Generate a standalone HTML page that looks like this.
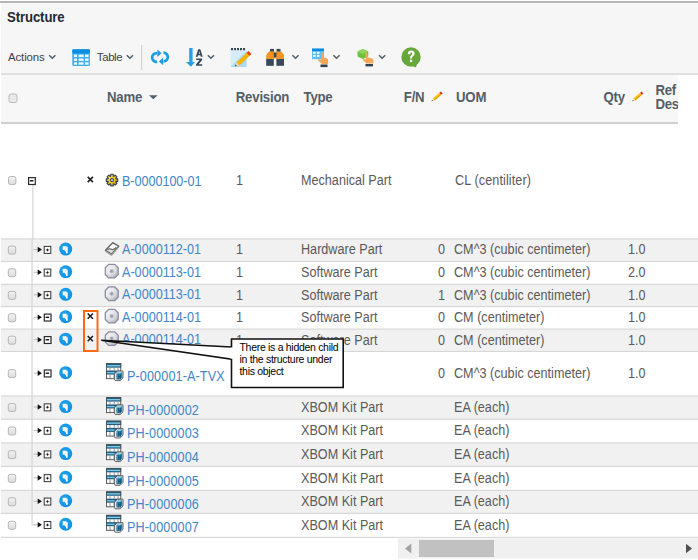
<!DOCTYPE html>
<html><head><meta charset="utf-8"><title>Structure</title>
<style>
html,body{margin:0;padding:0;width:698px;height:560px;overflow:hidden;background:#fff}
body{position:relative;font-family:"Liberation Sans", sans-serif}
.t{position:absolute;white-space:nowrap;line-height:20px}
svg{position:absolute;left:0;top:0}
</style></head><body>
<svg width="698" height="560" viewBox="0 0 698 560"><defs>
<linearGradient id="cbg" x1="0" y1="0" x2="0" y2="1"><stop offset="0" stop-color="#f2f2f2"/><stop offset="1" stop-color="#dcdcdc"/></linearGradient>
<linearGradient id="swl" x1="0" y1="0" x2="1" y2="1"><stop offset="0" stop-color="#fafafa"/><stop offset="0.45" stop-color="#e4e4e8"/><stop offset="1" stop-color="#ababb8"/></linearGradient><radialGradient id="swg" cx="0.5" cy="0.5" r="0.5"><stop offset="0" stop-color="#8c8ca0"/><stop offset="0.3" stop-color="#a8a8b6" stop-opacity="0.9"/><stop offset="0.55" stop-color="#e4e4ea" stop-opacity="0.6"/><stop offset="1" stop-color="#ffffff" stop-opacity="0"/></radialGradient>
<radialGradient id="blg" cx="0.4" cy="0.4" r="0.65"><stop offset="0" stop-color="#22a6f0"/><stop offset="1" stop-color="#0b8fe0"/></radialGradient>
<linearGradient id="gg" x1="0" y1="0" x2="1" y2="1"><stop offset="0" stop-color="#fff27a"/><stop offset="0.5" stop-color="#f5d21a"/><stop offset="1" stop-color="#d9a800"/></linearGradient>
<g id="cb"><rect x="0.5" y="0.5" width="7.4" height="8" rx="2" fill="url(#cbg)" stroke="#b4b4b4" stroke-width="1"/></g>
<g id="plus"><rect x="0.5" y="0.5" width="6.6" height="7" fill="#fff" stroke="#333" stroke-width="1"/><path d="M2 4 H5.6 M3.8 2.2 V5.8" stroke="#a0a0a0" stroke-width="0.8"/><circle cx="3.8" cy="4" r="1" fill="#111"/></g>
<g id="minus"><rect x="0.6" y="0.6" width="6.7" height="6.9" fill="#fff" stroke="#2a2a2a" stroke-width="1.2"/><path d="M1.9 3.8 H5.4" stroke="#111" stroke-width="1.4"/></g>
<g id="arr"><path d="M0 0 H4.3" stroke="#b8b8b8" stroke-width="1"/><path d="M4 -2.8 L8.2 0 L4 2.8 Z" fill="#111"/></g>
<g id="blue"><circle cx="0" cy="0" r="6.5" fill="url(#blg)"/><path d="M-3 -2.9 H0.75 L1.1 -2 H1.95 V4.15 H0.25 V2.6 L-1.5 0.9 H-3 Z" fill="#fff"/><path d="M1.1 -2.2 L-1.1 0.7" stroke="#9ad6f8" stroke-width="0.6"/></g>
<g id="xm"><path d="M0.9 0.9 L6.1 6.1 M6.1 0.9 L0.9 6.1" stroke="#1a1a1a" stroke-width="1.5"/></g>
<g id="sw"><path d="M4.1 0.7 H10.1 L13.6 4.2 V10.8 L10.1 14.3 H4.1 L0.7 10.8 V4.2 Z" fill="url(#swl)" stroke="#8a8aa2" stroke-width="1.3"/><circle cx="7.1" cy="7.5" r="4.6" fill="url(#swg)"/></g>
<g id="hw"><path d="M7.7 0.8 L13.8 4.1 L6.7 12.4 L0.4 8.4 Z" fill="#dcdcdc" stroke="#646464" stroke-width="1.3" stroke-linejoin="round"/><path d="M7.7 2.2 L12 4.5 L8.8 8 L4.2 5.8 Z" fill="#fafafa"/><path d="M2.6 7.9 Q4.8 6.2 6.4 7.4 Q8 8.6 11.2 5.6" fill="none" stroke="#666" stroke-width="1.1"/><path d="M0.6 9.4 L6.5 13.2 L13.8 5" fill="none" stroke="#999" stroke-width="1.2"/></g>
<g id="kit">
<rect x="0" y="0" width="15.2" height="15.8" fill="#fafafa"/>
<rect x="0" y="0" width="15.2" height="4.4" fill="#1e5c7c"/>
<rect x="0.6" y="1.8" width="14" height="1.4" fill="#7acbec"/>
<rect x="0" y="7.3" width="15.2" height="4" fill="#1e5c7c"/>
<rect x="0.6" y="8.8" width="8" height="1.3" fill="#7acbec"/>
<path d="M4 4.4 V7.3 M8.2 4.4 V7.3 M12 4.4 V7.3 M4 11.3 V15.5 M8.2 11.3 V15.5" stroke="#8a8a8a" stroke-width="0.9"/>
<rect x="0.45" y="0.45" width="14.3" height="15" fill="none" stroke="#4e4e4e" stroke-width="0.9"/>
<path d="M8.4 10.6 L11.6 7.8 L17 7.8 L17 14.6 L14.2 17.4 L9.2 17.4 L8.4 16 Z" fill="#e9e9e9" stroke="#555" stroke-width="0.9"/>
<path d="M10.4 10.6 L12.2 8.8 L16.2 8.8 L16.2 14.2 L14.2 16.2 L10.4 16.2 Z" fill="#2a7aa3"/>
<path d="M10.4 10.6 L12.2 8.8 L16.2 8.8 L14.4 10.6 Z" fill="#86d0ee"/>
<path d="M14.4 10.6 V16.2 M12.2 10.6 V16 M10.4 13.4 H14.4" stroke="#164f6e" stroke-width="0.8"/>
<path d="M11.2 11.4 V15.2" stroke="#6ec2e6" stroke-width="0.7"/>
</g>
<g id="gear"><path d="M4.79 2.08 L4.71 0.24 L7.29 0.24 L7.21 2.08 L7.91 2.37 L9.16 1.02 L10.98 2.84 L9.63 4.09 L9.92 4.79 L11.76 4.71 L11.76 7.29 L9.92 7.21 L9.63 7.91 L10.98 9.16 L9.16 10.98 L7.91 9.63 L7.21 9.92 L7.29 11.76 L4.71 11.76 L4.79 9.92 L4.09 9.63 L2.84 10.98 L1.02 9.16 L2.37 7.91 L2.08 7.21 L0.24 7.29 L0.24 4.71 L2.08 4.79 L2.37 4.09 L1.02 2.84 L2.84 1.02 L4.09 2.37 Z" fill="url(#gg)" stroke="#353a58" stroke-width="1.05" stroke-linejoin="round"/><circle cx="6" cy="6" r="1.7" fill="#aab2e6" stroke="#353a58" stroke-width="0.9"/></g>
</defs>
<rect x="0" y="0" width="698" height="560" fill="#ffffff"/>
<rect x="1" y="3" width="697" height="70" fill="#f6f6f6"/>
<rect x="0" y="1" width="698" height="2" fill="#b6b6b6"/>
<rect x="1" y="73" width="697" height="2" fill="#e0e0e0"/>
<rect x="1" y="75" width="677" height="47" fill="#f7f7f7"/>
<rect x="1" y="122" width="677" height="2" fill="#cfcfcf"/>
<rect x="1" y="124" width="697" height="114.93" fill="#ffffff"/>
<rect x="1" y="238.93" width="697" height="22.529999999999973" fill="#f1f1f1"/>
<rect x="1" y="261.46" width="697" height="22.83000000000004" fill="#ffffff"/>
<rect x="1" y="284.29" width="697" height="22.279999999999973" fill="#f1f1f1"/>
<rect x="1" y="306.57" width="697" height="22.53000000000003" fill="#ffffff"/>
<rect x="1" y="329.1" width="697" height="22.359999999999957" fill="#f1f1f1"/>
<rect x="1" y="351.46" width="697" height="44.54000000000002" fill="#ffffff"/>
<rect x="1" y="396.0" width="697" height="23.30000000000001" fill="#f1f1f1"/>
<rect x="1" y="419.3" width="697" height="23.629999999999995" fill="#ffffff"/>
<rect x="1" y="442.93" width="697" height="23.569999999999993" fill="#f1f1f1"/>
<rect x="1" y="466.5" width="697" height="23.860000000000014" fill="#ffffff"/>
<rect x="1" y="490.36" width="697" height="23.0" fill="#f1f1f1"/>
<rect x="1" y="513.36" width="697" height="24.0" fill="#ffffff"/>
<rect x="1" y="238.38" width="697" height="1.1" fill="#d6d6d6"/>
<rect x="1" y="260.90999999999997" width="697" height="1.1" fill="#d6d6d6"/>
<rect x="1" y="283.74" width="697" height="1.1" fill="#d6d6d6"/>
<rect x="1" y="306.02" width="697" height="1.1" fill="#d6d6d6"/>
<rect x="1" y="328.55" width="697" height="1.1" fill="#d6d6d6"/>
<rect x="1" y="350.90999999999997" width="697" height="1.1" fill="#d6d6d6"/>
<rect x="1" y="395.45" width="697" height="1.1" fill="#d6d6d6"/>
<rect x="1" y="418.75" width="697" height="1.1" fill="#d6d6d6"/>
<rect x="1" y="442.38" width="697" height="1.1" fill="#d6d6d6"/>
<rect x="1" y="465.95" width="697" height="1.1" fill="#d6d6d6"/>
<rect x="1" y="489.81" width="697" height="1.1" fill="#d6d6d6"/>
<rect x="1" y="512.8100000000001" width="697" height="1.1" fill="#d6d6d6"/>
<rect x="1" y="536.8100000000001" width="697" height="1.1" fill="#d6d6d6"/>
<rect x="32.3" y="185" width="1.1" height="54" fill="#d2d2d2"/>
<rect x="31.5" y="239" width="1.1" height="286" fill="#d2d2d2"/>
<rect x="398" y="538.5" width="300" height="20" fill="#f0f0f0"/>
<rect x="419" y="540" width="75" height="17" fill="#c1c1c1"/>
<path d="M411.3 543.4 L405 548.5 L411.3 553.6 Z" fill="#a3a3a3"/>
<path d="M686 543.7 L692 548.5 L686 553.3 Z" fill="#505050"/>
<path d="M49.199999999999996 55.300000000000004 L52.3 58.300000000000004 L55.4 55.300000000000004" fill="none" stroke="#4e5d68" stroke-width="1.5"/>
<path d="M126.8 55.2 L129.9 58.2 L133 55.2" fill="none" stroke="#4e5d68" stroke-width="1.5"/>
<path d="M207.8 55.2 L210.9 58.2 L214 55.2" fill="none" stroke="#4e5d68" stroke-width="1.5"/>
<path d="M292.40000000000003 55.300000000000004 L295.5 58.300000000000004 L298.6 55.300000000000004" fill="none" stroke="#4e5d68" stroke-width="1.5"/>
<path d="M333.40000000000003 55.2 L336.5 58.2 L339.6 55.2" fill="none" stroke="#4e5d68" stroke-width="1.5"/>
<path d="M379.0 55.300000000000004 L382.09999999999997 58.300000000000004 L385.2 55.300000000000004" fill="none" stroke="#4e5d68" stroke-width="1.5"/>
<rect x="141" y="45" width="1.2" height="25" fill="#d4d4d4"/>
<g>
<rect x="72.3" y="49.2" width="17.6" height="16.8" rx="1.5" fill="#3eaef0"/>
<rect x="72.3" y="49.2" width="17.6" height="4.3" rx="1" fill="#0b8ee0"/>
<g fill="#ffffff" opacity="0.92">
<rect x="74" y="54.6" width="3" height="2.4"/><rect x="78.6" y="54.6" width="5" height="2.4"/><rect x="85" y="54.6" width="3.6" height="2.4"/>
<rect x="74" y="58.5" width="3" height="2.4"/><rect x="78.6" y="58.5" width="5" height="2.4"/><rect x="85" y="58.5" width="3.6" height="2.4"/>
<rect x="74" y="62.3" width="3" height="2.4"/><rect x="78.6" y="62.3" width="5" height="2.4"/><rect x="85" y="62.3" width="3.6" height="2.4"/>
</g></g>
<g fill="none" stroke="#1b9be3" stroke-width="2.7">
<path d="M157 53.3 A4.3 4.3 0 1 0 157.2 61.8"/>
<path d="M163.5 52.7 A4.3 4.3 0 1 1 163.6 61.3"/>
</g>
<g fill="#1b9be3">
<path d="M157.3 49.6 L161.6 53.3 L157.3 57 Z"/>
<path d="M163.2 57.6 L158.9 61.4 L163.2 65.2 Z"/>
</g>
<g fill="#249fe8">
<rect x="189.2" y="48" width="3.4" height="14.5"/>
<path d="M186 62 L195 62 L190.9 66.8 Z"/>
</g>
<g fill="#34475a"><path fill-rule="evenodd" d="M195.8 56.7 L198.2 49.2 L200.3 49.2 L202.7 56.7 L200.8 56.7 L200.35 55.2 L198.15 55.2 L197.7 56.7 Z M198.6 53.7 L199.9 53.7 L199.25 51.3 Z"/><path d="M196.2 58.4 H202.1 V59.9 L198.6 64.2 H202.2 V65.7 H196.1 V64.2 L199.6 59.9 H196.2 Z"/></g>
<g>
<rect x="230.5" y="48.5" width="16" height="18.5" fill="#d5ecfa"/>
<path d="M230.5 67 L246.5 51 L246.5 67 Z" fill="#a9d9f5"/>
<g fill="#3d4650"><rect x="231" y="48" width="2" height="2.2"/><rect x="234" y="48" width="2" height="2.2"/><rect x="237" y="48" width="2" height="2.2"/><rect x="240" y="48" width="2" height="2.2"/><rect x="243" y="48" width="2" height="2.2"/></g>
<path d="M236.5 62.5 L247.5 52 L250.5 55 L239.5 65.5 Z" fill="#f6b400"/>
<path d="M246.5 52.8 L248.5 51 L251.5 54 L249.5 55.8 Z" fill="#e8421a"/>
<path d="M236.5 62.5 L239.5 65.5 L235 66.8 Z" fill="#f3d7a6"/>
<path d="M235.6 64.5 L236.8 65.8 L235 66.5 Z" fill="#333"/>
</g>
<g>
<rect x="270" y="48.9" width="4" height="3" fill="#37495a"/>
<rect x="276.5" y="48.9" width="4" height="3" fill="#37495a"/>
<path d="M266.2 55 L269 51.5 L274.5 51.5 L274.5 59 L266.2 59 Z" fill="#f7931e"/>
<path d="M284 55 L281.2 51.5 L275.7 51.5 L275.7 59 L284 59 Z" fill="#f7931e"/>
<rect x="273.8" y="52.5" width="2.6" height="5" fill="#37495a"/>
<rect x="266.2" y="59" width="7.6" height="6.8" fill="#37495a"/>
<rect x="276.4" y="59" width="7.6" height="6.8" fill="#37495a"/>
</g>
<g>
<rect x="312" y="48.6" width="12" height="10.6" fill="#5cc0f5"/>
<rect x="312" y="48.6" width="12" height="2.4" fill="#0a88dc"/>
<g fill="#fff"><rect x="313.2" y="52" width="2.4" height="1.8"/><rect x="317" y="52" width="2.4" height="1.8"/><rect x="313.2" y="55" width="2.4" height="1.8"/><rect x="317" y="55" width="2.4" height="1.8"/></g>
<path d="M321.5 52.5 Q323 52 323.3 53.5 L323.5 57.5 Q327.5 57.5 328.2 60 L328 64 L322 64 L318 60.5 Q317.5 59 319 59 L321 60 Z" fill="#f6a85a"/>
<rect x="320.5" y="64.5" width="7" height="2.6" fill="#2e3f4e"/>
</g>
<g>
<path d="M362.9 48.9 L368.3 51.5 L368.3 56.5 L362.9 59 L357.5 56.5 L357.5 51.5 Z" fill="#6cc23a"/>
<path d="M362.9 48.9 L368.3 51.5 L362.9 54 L357.5 51.5 Z" fill="#8fd65a"/>
<path d="M365.5 52.8 Q367 52.3 367.3 53.8 L367.5 57.5 Q372.8 57.5 373.5 60 L373.3 63.5 L366.5 63.5 L362.8 60.3 Q362.5 59 364 59 L365.5 59.8 Z" fill="#f6a85a"/>
<rect x="365.5" y="64" width="7.5" height="2.4" fill="#2e3f4e"/>
</g>
<g>
<circle cx="411" cy="57" r="9.7" fill="#68a83a"/>
<path d="M410.5 65 L417.5 63 L415.8 67.4 Z" fill="#68a83a"/>
<path d="M407.8 54.2 Q407.8 50.6 411.2 50.6 Q414.6 50.6 414.6 53.8 Q414.6 55.6 412.6 56.6 Q412 57 412 58.6 L410 58.6 Q410 56.2 411.2 55.3 Q412.3 54.6 412.3 53.7 Q412.3 52.6 411.2 52.6 Q410.1 52.6 410.1 54.2 Z" fill="#fff"/>
<rect x="409.9" y="59.8" width="2.3" height="2.3" fill="#fff"/>
</g>
<rect x="9" y="94" width="8" height="8.5" rx="2" fill="#e9e9e9" stroke="#b9b9b9" stroke-width="1"/>
<path d="M149 95.2 L157.6 95.2 L153.3 99.3 Z" fill="#4f5f6c"/>
<g transform="translate(431.6,101.2)">
<path d="M1.21 -2.89 L7.73 -8.49 L9.55 -6.37 L3.04 -0.76 Z" fill="#f7c51c"/>
<path d="M2.32 -1.60 L8.84 -7.21 L9.55 -6.37 L3.04 -0.76 Z" fill="#e9a000"/>
<path d="M7.73 -8.49 L9.24 -9.80 L11.07 -7.68 L9.55 -6.37 Z" fill="#d8301c"/>
<path d="M0.00 0.00 L1.21 -2.89 L3.04 -0.76 Z" fill="#efd4a0"/>
<path d="M-0.15 0.13 L0.52 -1.24 L1.30 -0.33 Z" fill="#3a3a3a"/>
</g>
<g transform="translate(632.4,101.2)">
<path d="M1.21 -2.89 L7.73 -8.49 L9.55 -6.37 L3.04 -0.76 Z" fill="#f7c51c"/>
<path d="M2.32 -1.60 L8.84 -7.21 L9.55 -6.37 L3.04 -0.76 Z" fill="#e9a000"/>
<path d="M7.73 -8.49 L9.24 -9.80 L11.07 -7.68 L9.55 -6.37 Z" fill="#d8301c"/>
<path d="M0.00 0.00 L1.21 -2.89 L3.04 -0.76 Z" fill="#efd4a0"/>
<path d="M-0.15 0.13 L0.52 -1.24 L1.30 -0.33 Z" fill="#3a3a3a"/>
</g>
<use href="#cb" x="8" y="176"/>
<use href="#minus" x="28" y="177"/>
<use href="#xm" x="86.8" y="176"/>
<use href="#gear" x="106" y="174.1"/>
<use href="#cb" x="7.8" y="245.595"/>
<use href="#arr" x="33.7" y="249.595"/>
<use href="#plus" x="43.7" y="245.895"/>
<use href="#blue" x="65.7" y="249.095"/>
<use href="#hw" x="105" y="241.89499999999998"/>
<use href="#cb" x="7.8" y="268.275"/>
<use href="#arr" x="33.7" y="272.275"/>
<use href="#plus" x="43.7" y="268.575"/>
<use href="#blue" x="65.7" y="271.775"/>
<use href="#sw" x="104.6" y="263.675"/>
<use href="#cb" x="7.8" y="290.83"/>
<use href="#arr" x="33.7" y="294.83"/>
<use href="#plus" x="43.7" y="291.13"/>
<use href="#blue" x="65.7" y="294.33"/>
<use href="#sw" x="104.6" y="286.23"/>
<use href="#cb" x="7.8" y="313.235"/>
<use href="#arr" x="33.7" y="317.235"/>
<use href="#minus" x="43.7" y="313.535"/>
<use href="#blue" x="65.7" y="316.735"/>
<use href="#xm" x="86.8" y="312.635"/>
<use href="#sw" x="104.6" y="308.63500000000005"/>
<use href="#cb" x="7.8" y="335.67999999999995"/>
<use href="#arr" x="33.7" y="339.67999999999995"/>
<use href="#minus" x="43.7" y="335.97999999999996"/>
<use href="#blue" x="65.7" y="339.17999999999995"/>
<use href="#xm" x="86.8" y="335.0799999999999"/>
<use href="#sw" x="104.6" y="331.08"/>
<use href="#cb" x="7.8" y="369.13"/>
<use href="#arr" x="33.7" y="373.13"/>
<use href="#minus" x="43.7" y="369.43"/>
<use href="#blue" x="65.7" y="372.63"/>
<use href="#kit" x="106" y="363.23"/>
<use href="#cb" x="7.8" y="403.04999999999995"/>
<use href="#arr" x="33.7" y="407.04999999999995"/>
<use href="#plus" x="43.7" y="403.34999999999997"/>
<use href="#blue" x="65.7" y="406.54999999999995"/>
<use href="#kit" x="106" y="397.15"/>
<use href="#cb" x="7.8" y="426.515"/>
<use href="#arr" x="33.7" y="430.515"/>
<use href="#plus" x="43.7" y="426.815"/>
<use href="#blue" x="65.7" y="430.015"/>
<use href="#kit" x="106" y="420.615"/>
<use href="#cb" x="7.8" y="450.115"/>
<use href="#arr" x="33.7" y="454.115"/>
<use href="#plus" x="43.7" y="450.415"/>
<use href="#blue" x="65.7" y="453.615"/>
<use href="#kit" x="106" y="444.21500000000003"/>
<use href="#cb" x="7.8" y="473.83"/>
<use href="#arr" x="33.7" y="477.83"/>
<use href="#plus" x="43.7" y="474.13"/>
<use href="#blue" x="65.7" y="477.33"/>
<use href="#kit" x="106" y="467.93"/>
<use href="#cb" x="7.8" y="497.26"/>
<use href="#arr" x="33.7" y="501.26"/>
<use href="#plus" x="43.7" y="497.56"/>
<use href="#blue" x="65.7" y="500.76"/>
<use href="#kit" x="106" y="491.36"/>
<use href="#cb" x="7.8" y="520.76"/>
<use href="#arr" x="33.7" y="524.76"/>
<use href="#plus" x="43.7" y="521.06"/>
<use href="#blue" x="65.7" y="524.26"/>
<use href="#kit" x="106" y="514.86"/>
<rect x="31.5" y="524.5" width="3" height="1" fill="#d2d2d2"/>
</svg>
<div class="t" style="left:7px;top:7.63px;font-size:13.2px;color:#222a35;font-weight:bold;letter-spacing:-0.12px;transform-origin:0 14.57px;transform:scale(1,1.05);">Structure</div>
<div class="t" style="left:8px;top:46.95px;font-size:11.4px;color:#3b3f4a;font-weight:normal;letter-spacing:-0.1px;">Actions</div>
<div class="t" style="left:96.8px;top:47.05px;font-size:11.4px;color:#3b3f4a;font-weight:normal;letter-spacing:-0.35px;">Table</div>
<div class="t" style="left:107px;top:87.93px;font-size:13.2px;color:#535e68;font-weight:bold;letter-spacing:-0.2px;transform-origin:0 14.57px;transform:scale(1,1.06);">Name</div>
<div class="t" style="left:235.8px;top:87.93px;font-size:13.2px;color:#535e68;font-weight:bold;letter-spacing:-0.2px;transform-origin:0 14.57px;transform:scale(1,1.06);">Revision</div>
<div class="t" style="left:303.5px;top:87.93px;font-size:13.2px;color:#535e68;font-weight:bold;letter-spacing:-0.2px;transform-origin:0 14.57px;transform:scale(1,1.06);">Type</div>
<div class="t" style="left:403.8px;top:87.93px;font-size:13.2px;color:#535e68;font-weight:bold;letter-spacing:-0.2px;transform-origin:0 14.57px;transform:scale(1,1.06);">F/N</div>
<div class="t" style="left:456px;top:87.93px;font-size:13.2px;color:#535e68;font-weight:bold;letter-spacing:-0.2px;transform-origin:0 14.57px;transform:scale(1,1.06);">UOM</div>
<div class="t" style="left:603.5px;top:87.93px;font-size:13.2px;color:#535e68;font-weight:bold;letter-spacing:-0.2px;transform-origin:0 14.57px;transform:scale(1,1.06);">Qty</div>
<div style="position:absolute;left:0;top:0;width:678px;height:124px;overflow:hidden">
<div class="t" style="left:655.5px;top:80.63px;font-size:13.2px;color:#535e68;font-weight:bold;letter-spacing:-0.3px;transform-origin:0 14.57px;transform:scale(1,1.12);">Ref</div>
<div class="t" style="left:655.5px;top:94.63px;font-size:13.2px;color:#535e68;font-weight:bold;letter-spacing:-0.3px;transform-origin:0 14.57px;transform:scale(1,1.12);">Des</div>
</div>
<div class="t" style="left:121.6px;top:172.32px;font-size:13.5px;color:#4286c9;font-weight:normal;letter-spacing:-0.05px;transform-origin:0 14.68px;transform:scale(0.935,1.07);">B-0000100-01</div>
<div class="t" style="left:235.5px;top:171.32px;font-size:13.5px;color:#5a5a5a;font-weight:normal;letter-spacing:0px;transform-origin:0 14.68px;transform:scale(0.935,1.07);">1</div>
<div class="t" style="left:300.5px;top:171.32px;font-size:13.5px;color:#5a5a5a;font-weight:normal;letter-spacing:0px;transform-origin:0 14.68px;transform:scale(0.935,1.07);">Mechanical Part</div>
<div class="t" style="left:455.1px;top:171.32px;font-size:13.5px;color:#5a5a5a;font-weight:normal;letter-spacing:0.1px;transform-origin:0 14.68px;transform:scale(0.935,1.07);">CL (centiliter)</div>
<div class="t" style="left:121.7px;top:240.02px;font-size:13.5px;color:#4286c9;font-weight:normal;letter-spacing:0px;transform-origin:0 14.68px;transform:scale(0.935,1.07);">A-0000112-01</div>
<div class="t" style="left:235.5px;top:240.42px;font-size:13.5px;color:#5a5a5a;font-weight:normal;letter-spacing:0px;transform-origin:0 14.68px;transform:scale(0.935,1.07);">1</div>
<div class="t" style="left:300.5px;top:240.42px;font-size:13.5px;color:#5a5a5a;font-weight:normal;letter-spacing:0px;transform-origin:0 14.68px;transform:scale(0.935,1.07);">Hardware Part</div>
<div class="t" style="left:244.8px;width:200px;text-align:right;top:240.42px;font-size:13.5px;color:#5a5a5a;font-weight:normal;letter-spacing:0px;transform-origin:200px 14.68px;transform:scale(0.935,1.07);">0</div>
<div class="t" style="left:454.3px;top:240.42px;font-size:13.5px;color:#5a5a5a;font-weight:normal;letter-spacing:0px;transform-origin:0 14.68px;transform:scale(0.935,1.07);">CM^3 (cubic centimeter)</div>
<div class="t" style="left:627.8px;top:240.42px;font-size:13.5px;color:#5a5a5a;font-weight:normal;letter-spacing:0px;transform-origin:0 14.68px;transform:scale(0.935,1.07);">1.0</div>
<div class="t" style="left:121.7px;top:262.70px;font-size:13.5px;color:#4286c9;font-weight:normal;letter-spacing:0px;transform-origin:0 14.68px;transform:scale(0.935,1.07);">A-0000113-01</div>
<div class="t" style="left:235.5px;top:263.10px;font-size:13.5px;color:#5a5a5a;font-weight:normal;letter-spacing:0px;transform-origin:0 14.68px;transform:scale(0.935,1.07);">1</div>
<div class="t" style="left:300.5px;top:263.10px;font-size:13.5px;color:#5a5a5a;font-weight:normal;letter-spacing:0px;transform-origin:0 14.68px;transform:scale(0.935,1.07);">Software Part</div>
<div class="t" style="left:244.8px;width:200px;text-align:right;top:263.10px;font-size:13.5px;color:#5a5a5a;font-weight:normal;letter-spacing:0px;transform-origin:200px 14.68px;transform:scale(0.935,1.07);">0</div>
<div class="t" style="left:454.3px;top:263.10px;font-size:13.5px;color:#5a5a5a;font-weight:normal;letter-spacing:0px;transform-origin:0 14.68px;transform:scale(0.935,1.07);">CM^3 (cubic centimeter)</div>
<div class="t" style="left:627.8px;top:263.10px;font-size:13.5px;color:#5a5a5a;font-weight:normal;letter-spacing:0px;transform-origin:0 14.68px;transform:scale(0.935,1.07);">2.0</div>
<div class="t" style="left:121.7px;top:285.25px;font-size:13.5px;color:#4286c9;font-weight:normal;letter-spacing:0px;transform-origin:0 14.68px;transform:scale(0.935,1.07);">A-0000113-01</div>
<div class="t" style="left:235.5px;top:285.65px;font-size:13.5px;color:#5a5a5a;font-weight:normal;letter-spacing:0px;transform-origin:0 14.68px;transform:scale(0.935,1.07);">1</div>
<div class="t" style="left:300.5px;top:285.65px;font-size:13.5px;color:#5a5a5a;font-weight:normal;letter-spacing:0px;transform-origin:0 14.68px;transform:scale(0.935,1.07);">Software Part</div>
<div class="t" style="left:244.8px;width:200px;text-align:right;top:285.65px;font-size:13.5px;color:#5a5a5a;font-weight:normal;letter-spacing:0px;transform-origin:200px 14.68px;transform:scale(0.935,1.07);">1</div>
<div class="t" style="left:454.3px;top:285.65px;font-size:13.5px;color:#5a5a5a;font-weight:normal;letter-spacing:0px;transform-origin:0 14.68px;transform:scale(0.935,1.07);">CM^3 (cubic centimeter)</div>
<div class="t" style="left:627.8px;top:285.65px;font-size:13.5px;color:#5a5a5a;font-weight:normal;letter-spacing:0px;transform-origin:0 14.68px;transform:scale(0.935,1.07);">1.0</div>
<div class="t" style="left:121.7px;top:307.66px;font-size:13.5px;color:#4286c9;font-weight:normal;letter-spacing:0px;transform-origin:0 14.68px;transform:scale(0.935,1.07);">A-0000114-01</div>
<div class="t" style="left:235.5px;top:308.06px;font-size:13.5px;color:#5a5a5a;font-weight:normal;letter-spacing:0px;transform-origin:0 14.68px;transform:scale(0.935,1.07);">1</div>
<div class="t" style="left:300.5px;top:308.06px;font-size:13.5px;color:#5a5a5a;font-weight:normal;letter-spacing:0px;transform-origin:0 14.68px;transform:scale(0.935,1.07);">Software Part</div>
<div class="t" style="left:244.8px;width:200px;text-align:right;top:308.06px;font-size:13.5px;color:#5a5a5a;font-weight:normal;letter-spacing:0px;transform-origin:200px 14.68px;transform:scale(0.935,1.07);">0</div>
<div class="t" style="left:454.3px;top:308.06px;font-size:13.5px;color:#5a5a5a;font-weight:normal;letter-spacing:0px;transform-origin:0 14.68px;transform:scale(0.935,1.07);">CM (centimeter)</div>
<div class="t" style="left:627.8px;top:308.06px;font-size:13.5px;color:#5a5a5a;font-weight:normal;letter-spacing:0px;transform-origin:0 14.68px;transform:scale(0.935,1.07);">1.0</div>
<div class="t" style="left:121.7px;top:330.10px;font-size:13.5px;color:#4286c9;font-weight:normal;letter-spacing:0px;transform-origin:0 14.68px;transform:scale(0.935,1.07);">A-0000114-01</div>
<div class="t" style="left:235.5px;top:330.50px;font-size:13.5px;color:#5a5a5a;font-weight:normal;letter-spacing:0px;transform-origin:0 14.68px;transform:scale(0.935,1.07);">1</div>
<div class="t" style="left:300.5px;top:330.50px;font-size:13.5px;color:#5a5a5a;font-weight:normal;letter-spacing:0px;transform-origin:0 14.68px;transform:scale(0.935,1.07);">Software Part</div>
<div class="t" style="left:244.8px;width:200px;text-align:right;top:330.50px;font-size:13.5px;color:#5a5a5a;font-weight:normal;letter-spacing:0px;transform-origin:200px 14.68px;transform:scale(0.935,1.07);">0</div>
<div class="t" style="left:454.3px;top:330.50px;font-size:13.5px;color:#5a5a5a;font-weight:normal;letter-spacing:0px;transform-origin:0 14.68px;transform:scale(0.935,1.07);">CM (centimeter)</div>
<div class="t" style="left:627.8px;top:330.50px;font-size:13.5px;color:#5a5a5a;font-weight:normal;letter-spacing:0px;transform-origin:0 14.68px;transform:scale(0.935,1.07);">1.0</div>
<div class="t" style="left:127.1px;top:366.85px;font-size:13.5px;color:#4286c9;font-weight:normal;letter-spacing:0.12px;transform-origin:0 14.68px;transform:scale(0.935,1.07);">P-000001-A-TVX</div>
<div class="t" style="left:244.8px;width:200px;text-align:right;top:363.95px;font-size:13.5px;color:#5a5a5a;font-weight:normal;letter-spacing:0px;transform-origin:200px 14.68px;transform:scale(0.935,1.07);">0</div>
<div class="t" style="left:454.3px;top:363.95px;font-size:13.5px;color:#5a5a5a;font-weight:normal;letter-spacing:0px;transform-origin:0 14.68px;transform:scale(0.935,1.07);">CM^3 (cubic centimeter)</div>
<div class="t" style="left:627.8px;top:363.95px;font-size:13.5px;color:#5a5a5a;font-weight:normal;letter-spacing:0px;transform-origin:0 14.68px;transform:scale(0.935,1.07);">1.0</div>
<div class="t" style="left:127.1px;top:400.77px;font-size:13.5px;color:#4286c9;font-weight:normal;letter-spacing:0.12px;transform-origin:0 14.68px;transform:scale(0.935,1.07);">PH-0000002</div>
<div class="t" style="left:300.5px;top:397.87px;font-size:13.5px;color:#5a5a5a;font-weight:normal;letter-spacing:0px;transform-origin:0 14.68px;transform:scale(0.935,1.07);">XBOM Kit Part</div>
<div class="t" style="left:454.3px;top:397.87px;font-size:13.5px;color:#5a5a5a;font-weight:normal;letter-spacing:0px;transform-origin:0 14.68px;transform:scale(0.935,1.07);">EA (each)</div>
<div class="t" style="left:127.1px;top:424.24px;font-size:13.5px;color:#4286c9;font-weight:normal;letter-spacing:0.12px;transform-origin:0 14.68px;transform:scale(0.935,1.07);">PH-0000003</div>
<div class="t" style="left:300.5px;top:421.34px;font-size:13.5px;color:#5a5a5a;font-weight:normal;letter-spacing:0px;transform-origin:0 14.68px;transform:scale(0.935,1.07);">XBOM Kit Part</div>
<div class="t" style="left:454.3px;top:421.34px;font-size:13.5px;color:#5a5a5a;font-weight:normal;letter-spacing:0px;transform-origin:0 14.68px;transform:scale(0.935,1.07);">EA (each)</div>
<div class="t" style="left:127.1px;top:447.84px;font-size:13.5px;color:#4286c9;font-weight:normal;letter-spacing:0.12px;transform-origin:0 14.68px;transform:scale(0.935,1.07);">PH-0000004</div>
<div class="t" style="left:300.5px;top:444.94px;font-size:13.5px;color:#5a5a5a;font-weight:normal;letter-spacing:0px;transform-origin:0 14.68px;transform:scale(0.935,1.07);">XBOM Kit Part</div>
<div class="t" style="left:454.3px;top:444.94px;font-size:13.5px;color:#5a5a5a;font-weight:normal;letter-spacing:0px;transform-origin:0 14.68px;transform:scale(0.935,1.07);">EA (each)</div>
<div class="t" style="left:127.1px;top:471.55px;font-size:13.5px;color:#4286c9;font-weight:normal;letter-spacing:0.12px;transform-origin:0 14.68px;transform:scale(0.935,1.07);">PH-0000005</div>
<div class="t" style="left:300.5px;top:468.65px;font-size:13.5px;color:#5a5a5a;font-weight:normal;letter-spacing:0px;transform-origin:0 14.68px;transform:scale(0.935,1.07);">XBOM Kit Part</div>
<div class="t" style="left:454.3px;top:468.65px;font-size:13.5px;color:#5a5a5a;font-weight:normal;letter-spacing:0px;transform-origin:0 14.68px;transform:scale(0.935,1.07);">EA (each)</div>
<div class="t" style="left:127.1px;top:494.98px;font-size:13.5px;color:#4286c9;font-weight:normal;letter-spacing:0.12px;transform-origin:0 14.68px;transform:scale(0.935,1.07);">PH-0000006</div>
<div class="t" style="left:300.5px;top:492.08px;font-size:13.5px;color:#5a5a5a;font-weight:normal;letter-spacing:0px;transform-origin:0 14.68px;transform:scale(0.935,1.07);">XBOM Kit Part</div>
<div class="t" style="left:454.3px;top:492.08px;font-size:13.5px;color:#5a5a5a;font-weight:normal;letter-spacing:0px;transform-origin:0 14.68px;transform:scale(0.935,1.07);">EA (each)</div>
<div class="t" style="left:127.1px;top:518.48px;font-size:13.5px;color:#4286c9;font-weight:normal;letter-spacing:0.12px;transform-origin:0 14.68px;transform:scale(0.935,1.07);">PH-0000007</div>
<div class="t" style="left:300.5px;top:515.58px;font-size:13.5px;color:#5a5a5a;font-weight:normal;letter-spacing:0px;transform-origin:0 14.68px;transform:scale(0.935,1.07);">XBOM Kit Part</div>
<div class="t" style="left:454.3px;top:515.58px;font-size:13.5px;color:#5a5a5a;font-weight:normal;letter-spacing:0px;transform-origin:0 14.68px;transform:scale(0.935,1.07);">EA (each)</div>
<svg width="698" height="560" viewBox="0 0 698 560"><rect x="84" y="311" width="13.5" height="40" fill="none" stroke="#fa6a14" stroke-width="2"/><path d="M231.5 347 L101.3 340.2 L231.5 359.2 V387.5 H343.2 V339 H231.5 Z" fill="#fff" stroke="#111" stroke-width="1.6" stroke-linejoin="miter"/><path d="M231.5 347.6 V358.6" stroke="#fff" stroke-width="2"/></svg>
<div class="t" style="left:239.5px;top:337.36px;font-size:10.5px;color:#000000;font-weight:normal;letter-spacing:-0.3px;">There is a hidden child</div>
<div class="t" style="left:239.5px;top:349.26px;font-size:10.5px;color:#000000;font-weight:normal;letter-spacing:-0.3px;">in the structure under</div>
<div class="t" style="left:239.5px;top:360.76px;font-size:10.5px;color:#000000;font-weight:normal;letter-spacing:-0.3px;">this object</div>
</body></html>
